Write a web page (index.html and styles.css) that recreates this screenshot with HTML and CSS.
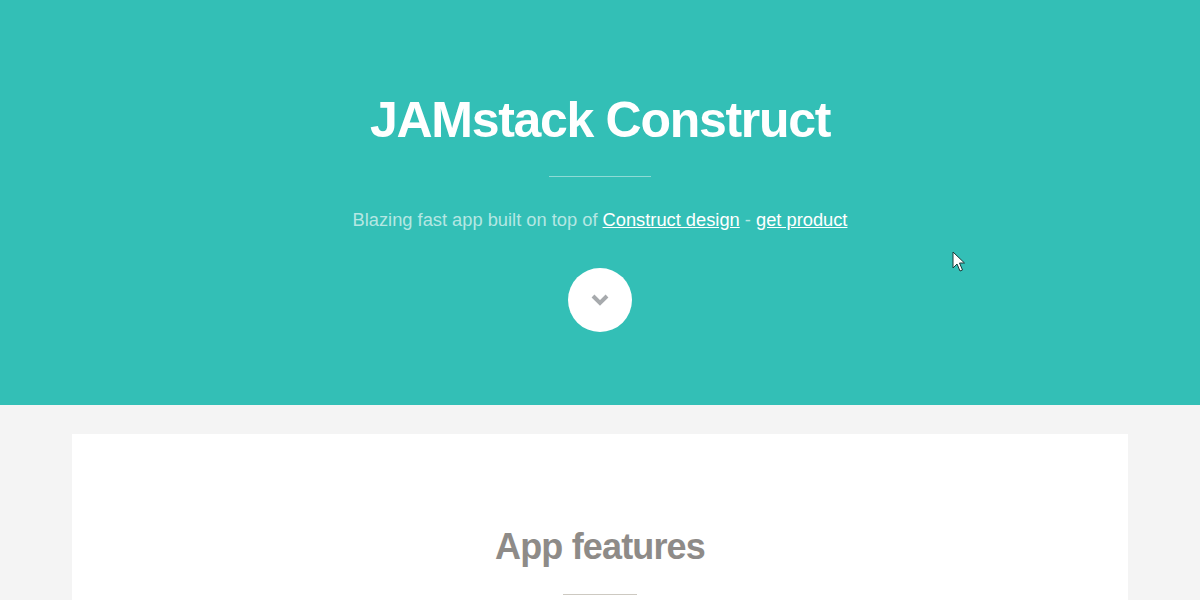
FILE: index.html
```html
<!DOCTYPE html>
<html>
<head>
<meta charset="utf-8">
<link rel="stylesheet" href="styles.css">
</head>
<body>
<header class="hero">
  <h1 class="hero-title">JAMstack Construct</h1>
  <div class="hero-rule"></div>
  <p class="hero-sub">Blazing fast app built on top of <a href="#">Construct design</a> - <a href="#">get product</a></p>
  <a class="hero-btn" href="#">
    <svg width="20" height="14" viewBox="0 0 20 14"><path d="M3 3 L10 10 L17 3" fill="none" stroke="#a7aaad" stroke-width="4"/></svg>
  </a>
  <svg class="cursor" width="14" height="22" viewBox="0 0 14 22"><path d="M1 1 L1 17 L5 13 L8 20 L10.5 19 L7.5 12 L12.5 12 Z" fill="#fff" stroke="#1a3a38" stroke-width="1"/></svg>
</header>
<main class="page">
  <section class="card">
    <h2 class="card-title">App features</h2>
    <div class="card-rule"></div>
  </section>
</main>
</body>
</html>
```
FILE: styles.css
```css
html, body { margin: 0; padding: 0; }
body {
  background: #f4f4f4;
  font-family: "Liberation Sans", Arial, sans-serif;
  overflow: hidden;
}
.hero {
  position: relative;
  background: #33bfb6;
  height: 405px;
  box-sizing: border-box;
  padding-top: 88px;
  display: flex;
  flex-direction: column;
  align-items: center;
}
.hero-title {
  margin: 0;
  color: #fff;
  font-size: 50px;
  line-height: 64px;
  font-weight: bold;
  letter-spacing: -1.3px;
}
.hero-rule {
  width: 102px;
  height: 1px;
  background: #8edbd5;
  margin-top: 24px;
}
.hero-sub {
  margin: 32px 0 0;
  color: #b5e7e3;
  font-size: 18.3px;
  line-height: 22px;
}
.hero-sub a { color: #fff; }
.hero-btn {
  margin-top: 37px;
  width: 64px;
  height: 64px;
  border-radius: 50%;
  background: #fff;
  display: flex;
  align-items: center;
  justify-content: center;
}
.cursor {
  position: absolute;
  left: 952px;
  top: 251px;
}
.page {
  padding: 29px 72px 0;
}
.card {
  background: #fff;
  height: 166px;
  display: flex;
  flex-direction: column;
  align-items: center;
  padding-top: 91px;
  box-sizing: border-box;
  overflow: hidden;
}
.card-title {
  margin: 0;
  color: #8e8b88;
  font-size: 36px;
  line-height: 44px;
  font-weight: bold;
  letter-spacing: -0.85px;
}
.card-rule {
  width: 74px;
  height: 1px;
  flex: none;
  background: #cdc9c1;
  margin-top: 25px;
}
```
